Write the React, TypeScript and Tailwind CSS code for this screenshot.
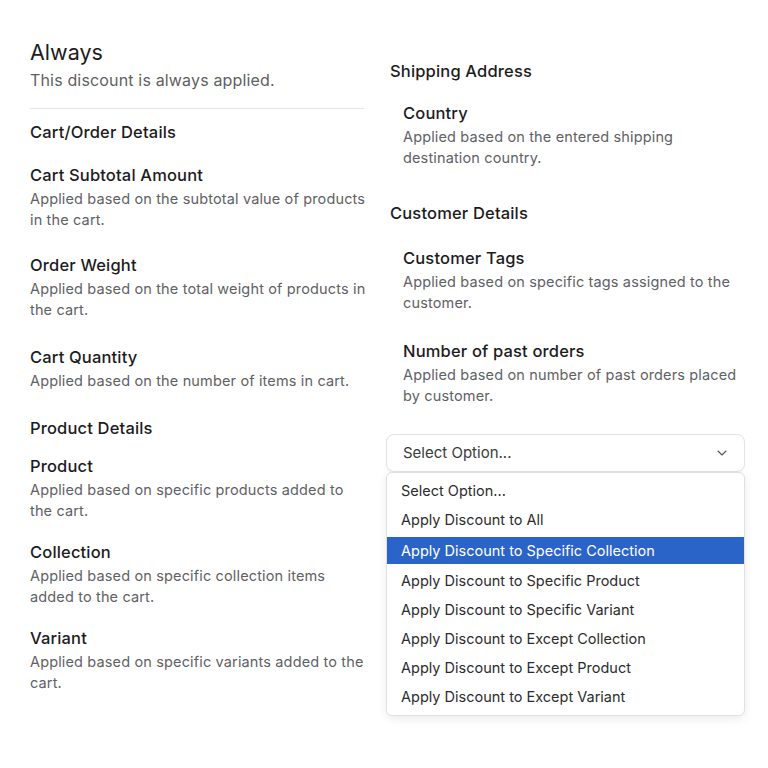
import { ChevronDown } from "lucide-react";

type Rule = { title: string; desc: string; gap: string };

const cartRules: Rule[] = [
  { title: "Cart Subtotal Amount", desc: "Applied based on the subtotal value of products in the cart.", gap: "mt-[21px]" },
  { title: "Order Weight", desc: "Applied based on the total weight of products in the cart.", gap: "mt-[24px]" },
  { title: "Cart Quantity", desc: "Applied based on the number of items in cart.", gap: "mt-[26px]" },
];

const productRules: Rule[] = [
  { title: "Product", desc: "Applied based on specific products added to the cart.", gap: "mt-[16px]" },
  { title: "Collection", desc: "Applied based on specific collection items added to the cart.", gap: "mt-[20px]" },
  { title: "Variant", desc: "Applied based on specific variants added to the cart.", gap: "mt-[20px]" },
];

const options = [
  "Select Option...",
  "Apply Discount to All",
  "Apply Discount to Specific Collection",
  "Apply Discount to Specific Product",
  "Apply Discount to Specific Variant",
  "Apply Discount to Except Collection",
  "Apply Discount to Except Product",
  "Apply Discount to Except Variant",
];

const RuleItem = ({ rule, className = "" }: { rule: Rule; className?: string }) => (
  <div className={`${rule.gap} ${className}`}>
    <h3 className="text-[16.5px] font-medium leading-[22px] tracking-[0.01em] text-[#1c1c1e]">{rule.title}</h3>
    <p className="mt-[2px] text-[14.5px] leading-[21px] tracking-[0.01em] text-[#616165]">{rule.desc}</p>
  </div>
);

const SectionTitle = ({ children, className = "" }: { children: string; className?: string }) => (
  <h2 className={`text-[16.5px] font-medium leading-[22px] tracking-[0.01em] text-[#1c1c1e] ${className}`}>
    {children}
  </h2>
);

const App = () => (
  <div
    className="min-h-screen bg-white px-[30px] pt-[38px]"
    style={{ fontFamily: "Inter, 'Noto Sans', sans-serif" }}
  >
    <div className="grid grid-cols-[336px_359px] gap-x-[24px]">
      {/* left column */}
      <div>
        <h1 className="text-[21.5px] leading-[28px] text-[#1c1c1e]">Always</h1>
        <p className="mt-[3px] text-[16px] leading-[22px] tracking-[0.01em] text-[#5f5f63]">
          This discount is always applied.
        </p>
        <div className="mt-[17px] mr-[2px] h-px bg-[#e6e6e6]" />

        <SectionTitle className="mt-[12px]">Cart/Order Details</SectionTitle>
        {cartRules.map((r) => (
          <RuleItem key={r.title} rule={r} />
        ))}

        <SectionTitle className="mt-[26px]">Product Details</SectionTitle>
        {productRules.map((r) => (
          <RuleItem key={r.title} rule={r} />
        ))}
      </div>

      {/* right column */}
      <div className="pt-[22px]">
        <SectionTitle>Shipping Address</SectionTitle>
        <RuleItem
          rule={{ title: "Country", desc: "Applied based on the entered shipping destination country.", gap: "mt-[20px]" }}
          className="pl-[13px]"
        />
        <SectionTitle className="mt-[34px]">Customer Details</SectionTitle>
        <RuleItem
          rule={{ title: "Customer Tags", desc: "Applied based on specific tags assigned to the customer.", gap: "mt-[23px]" }}
          className="pl-[13px]"
        />
        <RuleItem
          rule={{ title: "Number of past orders", desc: "Applied based on number of past orders placed by customer.", gap: "mt-[27px]" }}
          className="pl-[13px]"
        />

        {/* select with open listbox */}
        <div className="-ml-[4px] mt-[28px] w-[359px]">
          <div className="flex h-[38px] items-center justify-between rounded-[8px] border border-[#e3e3e3] bg-white pl-[16px] pr-[14px] shadow-[0_1px_2px_rgba(0,0,0,0.04)]">
            <span className="pt-[1px] text-[15px] text-[#3a3a3c]">Select Option...</span>
            <ChevronDown className="h-[16px] w-[16px] text-[#555]" strokeWidth={1.6} />
          </div>
          <ul className="overflow-hidden rounded-[6px] border border-[#e0e0e0] bg-white pt-[3px] pb-[4px] shadow-[0_3px_10px_rgba(0,0,0,0.08)]">
            {options.map((opt, i) => (
              <li
                key={opt}
                className={
                  i === 2
                    ? "mt-[3px] mb-[2px] flex h-[27px] items-center bg-[#2a64c8] pl-[14px] text-[14.5px] text-white"
                    : "flex h-[29px] items-center pl-[14px] text-[14.5px] text-[#2c2c2e]"
                }
              >
                {opt}
              </li>
            ))}
          </ul>
        </div>
      </div>
    </div>
  </div>
);

export default App;
